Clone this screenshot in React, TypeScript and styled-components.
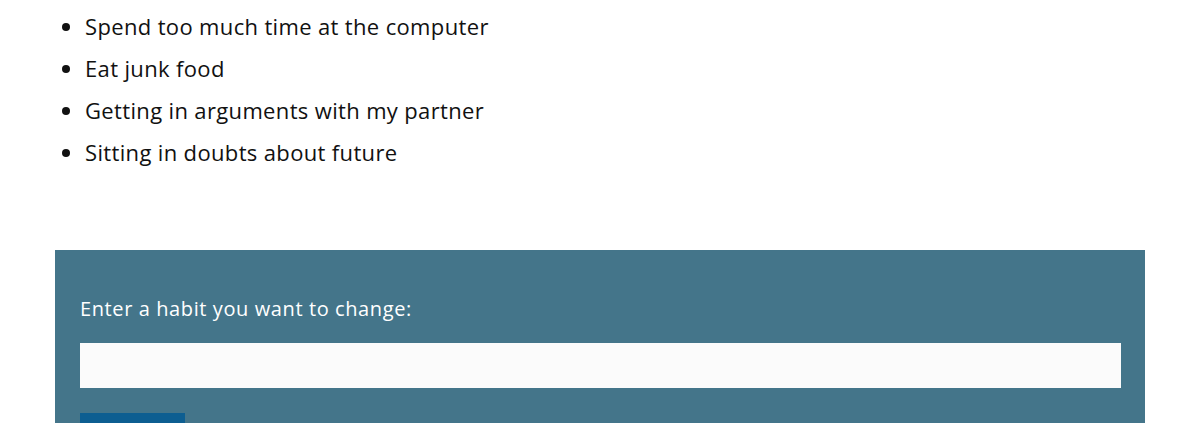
import React from "react";
import styled, { createGlobalStyle } from "styled-components";

const GlobalStyle = createGlobalStyle`
  body {
    margin: 0;
    background: #ffffff;
    font-family: "Open Sans", "Liberation Sans", sans-serif;
    color: #111111;
  }
`;

const Page = styled.div`
  padding: 0 55px;
`;

const HabitList = styled.ul`
  margin: 0;
  padding: 5px 0 0 30px;
  list-style: disc;
`;

const HabitItem = styled.li`
  font-size: 22px;
  line-height: 42px;
  letter-spacing: 0.35px;
`;

const FormPanel = styled.form`
  margin-top: 77px;
  background: #44758a;
  padding: 46px 24px 40px 25px;
  display: flex;
  flex-direction: column;
`;

const Label = styled.label`
  color: #ffffff;
  font-size: 20px;
  line-height: 26px;
  letter-spacing: 0.6px;
`;

const TextInput = styled.input`
  margin-top: 21px;
  height: 45px;
  box-sizing: border-box;
  border: none;
  background: #fbfbfb;
  padding: 0 12px;
  font-family: inherit;
  font-size: 18px;
`;

const SubmitButton = styled.button`
  margin-top: 25px;
  align-self: flex-start;
  width: 105px;
  padding: 16px 0;
  border: none;
  background: #0d5e91;
  color: #ffffff;
  font-family: inherit;
  font-size: 18px;
  line-height: 24px;
`;

const habits = [
  "Spend too much time at the computer",
  "Eat junk food",
  "Getting in arguments with my partner",
  "Sitting in doubts about future",
];

const App = () => {
  return (
    <Page>
      <GlobalStyle />
      <HabitList>
        {habits.map((habit) => (
          <HabitItem key={habit}>{habit}</HabitItem>
        ))}
      </HabitList>
      <FormPanel onSubmit={(e) => e.preventDefault()}>
        <Label htmlFor="habit">Enter a habit you want to change:</Label>
        <TextInput id="habit" type="text" />
        <SubmitButton type="submit">Submit</SubmitButton>
      </FormPanel>
    </Page>
  );
};

export default App;
